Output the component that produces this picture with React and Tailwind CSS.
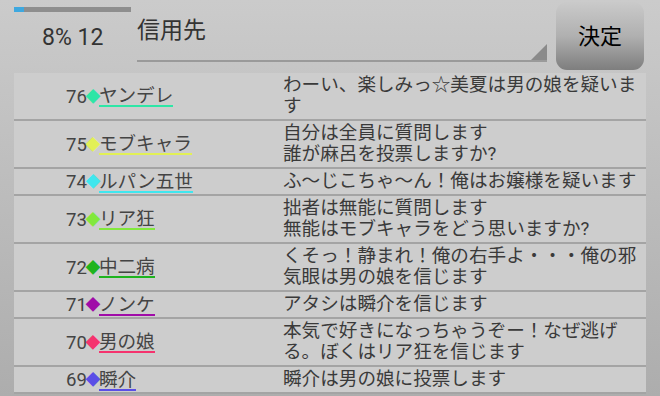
import React from "react";

const rows = [
  { n: 76, name: "ヤンデレ", color: "#2ee6a6", text: ["わーい、楽しみっ☆美夏は男の娘を疑いま", "す"] },
  { n: 75, name: "モブキャラ", color: "#e2f055", text: ["自分は全員に質問します", "誰が麻呂を投票しますか?"] },
  { n: 74, name: "ルパン五世", color: "#3fe6ee", text: ["ふ〜じこちゃ〜ん！俺はお嬢様を疑います"] },
  { n: 73, name: "リア狂", color: "#82e83c", text: ["拙者は無能に質問します", "無能はモブキャラをどう思いますか?"] },
  { n: 72, name: "中二病", color: "#1eb41e", text: ["くそっ！静まれ！俺の右手よ・・・俺の邪", "気眼は男の娘を信じます"] },
  { n: 71, name: "ノンケ", color: "#a00ca8", text: ["アタシは瞬介を信じます"] },
  { n: 70, name: "男の娘", color: "#f5336e", text: ["本気で好きになっちゃうぞー！なぜ逃げ", "る。ぼくはリア狂を信じます"] },
  { n: 69, name: "瞬介", color: "#5a4ee6", text: ["瞬介は男の娘に投票します"] },
];

const font = { fontFamily: 'Roboto, "Noto Sans CJK JP", sans-serif' };

export default function App() {
  return (
    <div
      className="w-[660px] h-[396px] overflow-hidden bg-gradient-to-b from-[#cbcbcb] to-[#adadad] text-[#3a3a3a]"
      style={font}
    >
      <div className="flex h-[73px]">
        <div className="w-[117px] ml-[14px] pt-[7px] flex flex-col">
          <div className="h-[5px] bg-[#8e8e8e] flex">
            <div className="w-[10px] bg-[#3ea8df]" />
          </div>
          <div className="mt-[12px] pl-[28px] text-[23px] leading-[28px] text-[#333]">8% 12</div>
        </div>
        <div className="ml-[6px] w-[410px] h-[62px] relative border-b-2 border-[#9a9a9a]">
          <div className="pt-[16px] text-[23px] leading-[30px] text-[#333]">信用先</div>
          <div className="absolute right-0 bottom-0 w-0 h-0 border-l-[16px] border-l-transparent border-b-[16px] border-b-[#8a8a8a]" />
        </div>
        <div className="ml-[9px] mt-[2px] w-[88px] h-[68px] rounded-[11px] bg-gradient-to-b from-[#cacaca] via-[#b0b0b0] to-[#7e7e7e] flex items-center justify-center text-[22px] text-black">
          決定
        </div>
      </div>
      <div className="mx-[14px]">
        {rows.map((r) => (
          <div key={r.n} className="flex bg-[#cdcdcd] border-b-2 border-[#a4a4a4] py-[1.5px]">
            <div className="w-[269px] pl-[52px] flex items-center text-[18.6px] leading-[18px] text-[#444]">
              <span className="pt-[1px]">{r.n}</span>
              <span className="text-[15px] leading-[18px] pt-[1px] -mx-[1.5px]" style={{ color: r.color }}>◆</span>
              <span className="border-b-2 pt-[2px]" style={{ borderColor: r.color }}>{r.name}</span>
            </div>
            <div className="flex-1 text-[18.6px] leading-[21.5px] text-[#3a3a3a]">
              {r.text.map((t, i) => (
                <div key={i}>{t}</div>
              ))}
            </div>
          </div>
        ))}
      </div>
    </div>
  );
}
